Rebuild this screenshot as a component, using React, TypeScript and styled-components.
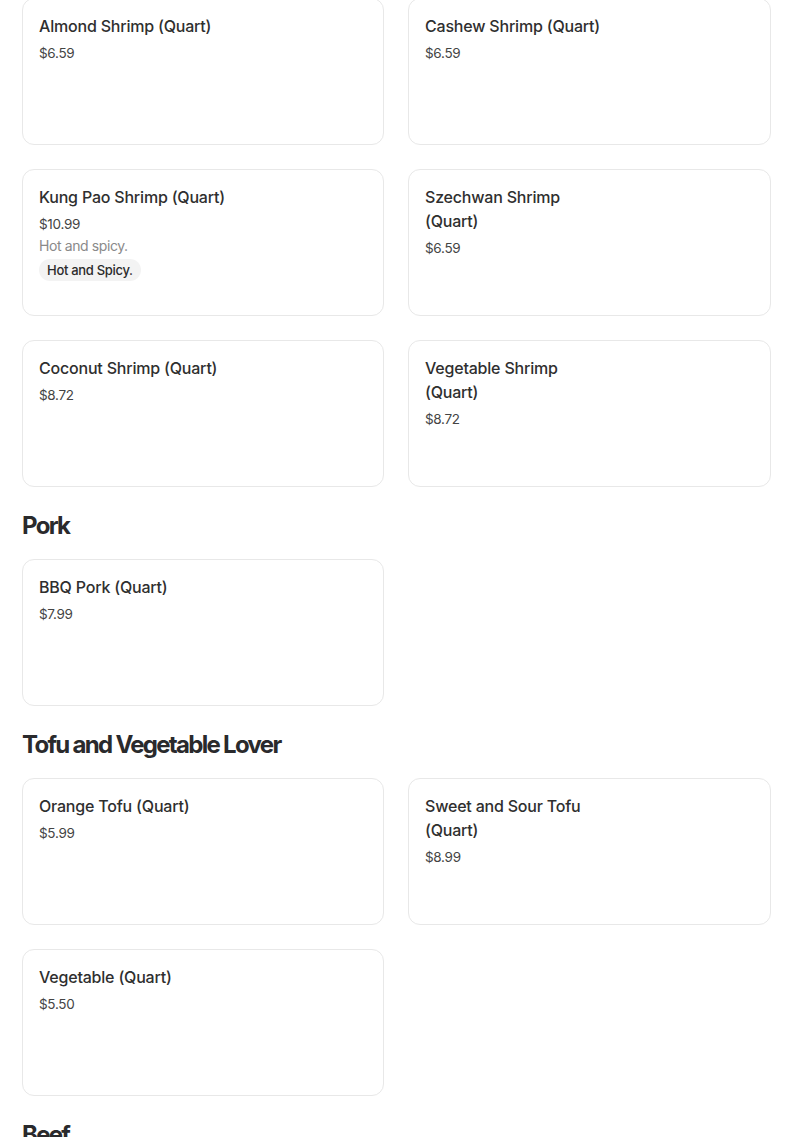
import styled, { createGlobalStyle } from "styled-components";

type Item = {
  id: number;
  title: string;
  price: string;
  description?: string;
  badge?: string;
};

type Section = {
  name?: string;
  items: Item[];
};

const sections: Section[] = [
  {
    items: [
      { id: 1, title: "Almond Shrimp (Quart)", price: "$6.59" },
      { id: 2, title: "Cashew Shrimp (Quart)", price: "$6.59" },
      {
        id: 3,
        title: "Kung Pao Shrimp (Quart)",
        price: "$10.99",
        description: "Hot and spicy.",
        badge: "Hot and Spicy.",
      },
      { id: 4, title: "Szechwan Shrimp (Quart)", price: "$6.59" },
      { id: 5, title: "Coconut Shrimp (Quart)", price: "$8.72" },
      { id: 6, title: "Vegetable Shrimp (Quart)", price: "$8.72" },
    ],
  },
  {
    name: "Pork",
    items: [{ id: 7, title: "BBQ Pork (Quart)", price: "$7.99" }],
  },
  {
    name: "Tofu and Vegetable Lover",
    items: [
      { id: 8, title: "Orange Tofu (Quart)", price: "$5.99" },
      { id: 9, title: "Sweet and Sour Tofu (Quart)", price: "$8.99" },
      { id: 10, title: "Vegetable (Quart)", price: "$5.50" },
    ],
  },
  { name: "Beef", items: [] },
];

const App = () => {
  return (
    <>
      <GlobalStyle />
      <Page>
        {sections.map((section, i) => (
          <SectionBlock key={i}>
            {section.name && <SectionTitle>{section.name}</SectionTitle>}
            {section.items.length > 0 && (
              <Grid>
                {section.items.map((item) => (
                  <Card key={item.id}>
                    <ItemTitle>{item.title}</ItemTitle>
                    <Price>{item.price}</Price>
                    {item.description && <Description>{item.description}</Description>}
                    {item.badge && <Badge>{item.badge}</Badge>}
                  </Card>
                ))}
              </Grid>
            )}
          </SectionBlock>
        ))}
      </Page>
    </>
  );
};

const GlobalStyle = createGlobalStyle`
  html, body {
    margin: 0;
    padding: 0;
    background: #ffffff;
    overflow: hidden;
  }
  body {
    font-family: Inter, "Liberation Sans", sans-serif;
    color: #2b2b2b;
  }
`;

const Page = styled.div`
  width: 749px;
  margin: -2px 0 0 22px;
  display: flex;
  flex-direction: column;
  gap: 23px;
`;

const SectionBlock = styled.section`
  display: flex;
  flex-direction: column;
  gap: 17px;
`;

const SectionTitle = styled.h2`
  margin: 0;
  font-size: 24px;
  line-height: 32px;
  font-weight: 700;
  letter-spacing: -1.7px;
  color: #2a2a2c;
`;

const Grid = styled.div`
  display: grid;
  grid-template-columns: 362px 363px;
  column-gap: 24px;
  row-gap: 24px;
`;

const Card = styled.div`
  box-sizing: border-box;
  height: 147px;
  padding: 15px 16px;
  border: 1px solid #e8e8e8;
  border-radius: 12px;
  background: #ffffff;
  display: flex;
  flex-direction: column;
  align-items: flex-start;
`;

const ItemTitle = styled.div`
  max-width: 186px;
  font-size: 16px;
  line-height: 24px;
  font-weight: 500;
  letter-spacing: -0.2px;
  color: #2f2f2f;
`;

const Price = styled.div`
  margin-top: 5px;
  font-size: 13.5px;
  line-height: 20px;
  letter-spacing: -0.3px;
  color: #444444;
`;

const Description = styled.div`
  margin-top: 2px;
  font-size: 14px;
  line-height: 20px;
  letter-spacing: -0.4px;
  color: #8a8a8a;
`;

const Badge = styled.span`
  margin-top: 3px;
  height: 22px;
  padding: 0 8px;
  border-radius: 11px;
  background: #f3f3f3;
  font-size: 13px;
  line-height: 22px;
  font-weight: 500;
  letter-spacing: -0.3px;
  color: #2b2b2b;
`;

export default App;
